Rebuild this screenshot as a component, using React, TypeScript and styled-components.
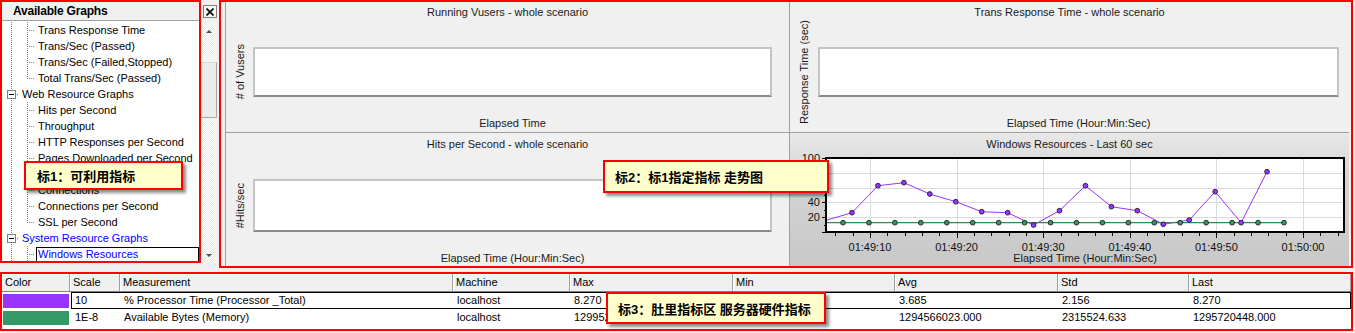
import React from 'react';
import styled, { createGlobalStyle } from 'styled-components';

const GlobalStyle = createGlobalStyle`
  html, body { margin: 0; padding: 0; }
  body {
    width: 1355px;
    height: 333px;
    overflow: hidden;
    background: #f0f0f0;
    font-family: "Liberation Sans", Arial, "Noto Sans CJK SC", sans-serif;
    font-size: 11px;
    color: #000;
  }
`;

const Screen = styled.div`
  position: relative;
  width: 1355px;
  height: 333px;
  display: flex;
  flex-direction: column;
`;

const TopArea = styled.div`
  display: flex;
  height: 268px;
`;

const RedFrame = styled.div`
  box-sizing: border-box;
  border: 2px solid #ff0000;
`;

/* ---------- available graphs tree ---------- */

const GraphTree = styled(RedFrame)`
  width: 201px;
  height: 263px;
  display: flex;
  flex-direction: column;
  background: #fff;
  overflow: hidden;
`;

const TreeHeader = styled.div`
  flex: none;
  height: 18px;
  line-height: 18px;
  padding-left: 11px;
  background: #f0f0f0;
  border-bottom: 1px solid #a0a0a0;
  font-size: 12px;
  font-weight: bold;
  letter-spacing: -0.2px;
`;

const TreeList = styled.div`
  padding: 1px 0 0 1px;
  display: flex;
  flex-direction: column;
`;

const TreeRow = styled.div`
  display: flex;
  align-items: center;
  height: 16px;
`;

const ConnectorBox = styled.span`
  flex: none;
  width: 16px;
  height: 16px;
  display: block;
  svg { display: block; }
`;

const TreeLabel = styled.span<{ $link?: boolean; $focused?: boolean }>`
  box-sizing: border-box;
  height: 15px;
  line-height: 13px;
  margin-left: 1px;
  padding: 0 1px;
  border: 1px solid ${(p) => (p.$focused ? '#000' : 'transparent')};
  color: ${(p) => (p.$link ? '#0000ff' : '#000')};
  white-space: nowrap;
  flex: ${(p) => (p.$focused ? 1 : 'none')};
`;

type Conn = 'pipe' | 'tee' | 'ell' | 'open';

type TreeItem = { label: string; cells: Conn[]; link?: boolean; focused?: boolean };

const TREE: TreeItem[] = [
  { label: 'Trans Response Time', cells: ['pipe', 'tee'] },
  { label: 'Trans/Sec (Passed)', cells: ['pipe', 'tee'] },
  { label: 'Trans/Sec (Failed,Stopped)', cells: ['pipe', 'tee'] },
  { label: 'Total Trans/Sec (Passed)', cells: ['pipe', 'ell'] },
  { label: 'Web Resource Graphs', cells: ['open'] },
  { label: 'Hits per Second', cells: ['pipe', 'tee'] },
  { label: 'Throughput', cells: ['pipe', 'tee'] },
  { label: 'HTTP Responses per Second', cells: ['pipe', 'tee'] },
  { label: 'Pages Downloaded per Second', cells: ['pipe', 'tee'] },
  { label: 'Retries per Second', cells: ['pipe', 'tee'] },
  { label: 'Connections', cells: ['pipe', 'tee'] },
  { label: 'Connections per Second', cells: ['pipe', 'tee'] },
  { label: 'SSL per Second', cells: ['pipe', 'ell'] },
  { label: 'System Resource Graphs', cells: ['open'], link: true },
  { label: 'Windows Resources', cells: ['pipe', 'tee'], link: true, focused: true },
];

const Connector = ({ kind }: { kind: Conn }) => (
  <ConnectorBox>
    <svg width="16" height="16" viewBox="0 0 16 16">
      <g stroke="#808080" strokeDasharray="1 1" shapeRendering="crispEdges">
        {(kind === 'pipe' || kind === 'tee') && <line x1="8.5" y1="0" x2="8.5" y2="16" />}
        {kind === 'ell' && <line x1="8.5" y1="0" x2="8.5" y2="9" />}
        {(kind === 'tee' || kind === 'ell') && <line x1="10" y1="8.5" x2="16" y2="8.5" />}
        {kind === 'open' && (
          <>
            <line x1="8.5" y1="0" x2="8.5" y2="4" />
            <line x1="8.5" y1="14" x2="8.5" y2="16" />
            <line x1="14" y1="8.5" x2="16" y2="8.5" />
          </>
        )}
      </g>
      {kind === 'open' && (
        <g shapeRendering="crispEdges">
          <rect x="4.5" y="4.5" width="8" height="8" fill="#fff" stroke="#808080" />
          <line x1="6" y1="8.5" x2="11" y2="8.5" stroke="#000" />
        </g>
      )}
    </svg>
  </ConnectorBox>
);

const SideColumn = styled.div`
  width: 17px;
  height: 263px;
  margin-right: 1px;
  display: flex;
  flex-direction: column;
`;

const CloseButton = styled.div`
  box-sizing: border-box;
  width: 14px;
  height: 13px;
  margin: 5px 0 0 2px;
  border: 1px solid #808080;
  background: #f4f4f4;
  display: flex;
  align-items: center;
  justify-content: center;
`;

const ScrollBar = styled.div`
  width: 16px;
  flex: 1;
  margin-top: 5px;
  display: flex;
  flex-direction: column;
  background: repeating-conic-gradient(#ececec 0 25%, #fbfbfb 0 50%) 0 0 / 2px 2px;
`;

const ScrollButton = styled.div`
  height: 16px;
  flex: none;
  display: flex;
  align-items: center;
  justify-content: center;
`;

const Arrow = styled.span<{ $down?: boolean }>`
  width: 0;
  height: 0;
  border-left: 3px solid transparent;
  border-right: 3px solid transparent;
  ${(p) => (p.$down ? 'border-top: 3px solid #505050;' : 'border-bottom: 3px solid #505050;')}
`;

const ScrollTrack = styled.div`
  flex: 1;
  padding-top: 23px;
`;

const ScrollThumb = styled.div`
  box-sizing: border-box;
  height: 56px;
  background: #ebebeb;
  border: 1px solid #a8a8a8;
  border-top-color: #d8d8d8;
  border-left-color: #d8d8d8;
`;

/* ---------- graph area ---------- */

const GraphArea = styled(RedFrame)`
  width: 1134px;
  height: 268px;
  padding: 0 2px 0 4px;
  display: grid;
  grid-template-columns: 564px 560px;
  grid-template-rows: 131px 133px;
  background: #f0f0f0;
`;

const Panel = styled.div<{ $top?: boolean; $active?: boolean }>`
  box-sizing: border-box;
  display: flex;
  flex-direction: column;
  border-left: 1px solid #a0a0a0;
  border-bottom: ${(p) => (p.$top ? '1px solid #a0a0a0' : 'none')};
  background: ${(p) =>
    p.$active ? 'linear-gradient(180deg, #e8e8e8 0%, #d4d4d4 35%, #c8c8c8 100%)' : '#f0f0f0'};
  min-width: 0;
`;

const PanelTitle = styled.div<{ $h: number }>`
  flex: none;
  height: ${(p) => p.$h}px;
  line-height: ${(p) => p.$h}px;
  text-align: center;
  color: #1a1a1a;
  white-space: nowrap;
`;

const PanelBody = styled.div<{ $top: number; $h: number }>`
  display: flex;
  flex: none;
  height: ${(p) => p.$h}px;
  margin-top: ${(p) => p.$top}px;
`;

const YLabelCol = styled.div<{ $w: number }>`
  flex: none;
  width: ${(p) => p.$w}px;
  height: 100%;
  display: flex;
  align-items: center;
  justify-content: center;
`;

const YLabel = styled.span`
  flex: none;
  writing-mode: vertical-rl;
  transform: rotate(180deg);
  white-space: nowrap;
  color: #1a1a1a;
`;

const EmptyPlot = styled.div<{ $right: number }>`
  box-sizing: border-box;
  flex: 1;
  height: 100%;
  margin-right: ${(p) => p.$right}px;
  background: #fff;
  border: 2px solid #c4c4c4;
  border-bottom-color: #8a8a8a;
`;

const XLabel = styled.div<{ $h: number; $left: number; $right: number }>`
  margin-top: auto;
  flex: none;
  height: ${(p) => p.$h}px;
  line-height: ${(p) => p.$h}px;
  padding: 0 ${(p) => p.$right}px 0 ${(p) => p.$left}px;
  text-align: center;
  color: #1a1a1a;
  white-space: nowrap;
`;

const ChartSvg = styled.svg`
  display: block;
  flex: none;
  overflow: visible;
  font-family: "Liberation Sans", Arial, sans-serif;
  font-size: 11px;
`;

type EmptyGraphProps = {
  title: string;
  yLabel: string;
  xLabel: string;
  top?: boolean;
  labelW: number;
  right: number;
};

const EmptyGraph = ({ title, yLabel, xLabel, top, labelW, right }: EmptyGraphProps) => (
  <Panel $top={top}>
    <PanelTitle $h={top ? 20 : 22}>{title}</PanelTitle>
    <PanelBody $top={top ? 25 : 24} $h={top ? 50 : 53}>
      <YLabelCol $w={labelW}>
        <YLabel>{yLabel}</YLabel>
      </YLabelCol>
      <EmptyPlot $right={right} />
    </PanelBody>
    <XLabel $h={top ? 18 : 16} $left={labelW} $right={right}>
      {xLabel}
    </XLabel>
  </Panel>
);

// Windows Resources chart, drawn in page coordinates
const PLOT = { x: 826, y: 158, w: 518, h: 74 };
const STEP = 25.94;
const PROC_Y = [212.7, 185.7, 182.7, 194, 201.7, 211.7, 212.7, 225, 210.7, 185.7, 206.7, 210.7, 224.3, 220, 191.7, 222.7, 171.7];
const procPts = PROC_Y.map((y, i) => [852 + STEP * i, y]);
const memPts = Array.from({ length: 18 }, (_, i) => [843 + STEP * i, 222.7]);
const TIMES = ['01:49:10', '01:49:20', '01:49:30', '01:49:40', '01:49:50', '01:50:00'];
const vy = (v: number) => PLOT.y + PLOT.h - (v * PLOT.h) / 100;

const WindowsChart = () => {
  const bottom = PLOT.y + PLOT.h;
  const right = PLOT.x + PLOT.w;
  const ticks: number[] = [];
  for (let k = -2; k <= 27; k++) ticks.push(k);
  return (
    <ChartSvg width="559" height="95" viewBox="790 155 559 95">
      <rect x={PLOT.x} y={PLOT.y} width={PLOT.w} height={PLOT.h} fill="#fff" />
      <g stroke="#dadada" strokeWidth="1" shapeRendering="crispEdges">
        {[80, 60, 40, 20].map((v) => (
          <line key={v} x1={PLOT.x} x2={right} y1={Math.round(vy(v)) + 0.5} y2={Math.round(vy(v)) + 0.5} />
        ))}
        {TIMES.map((t, i) => {
          const x = Math.round(870 + 86.6 * i) + 0.5;
          return <line key={t} x1={x} x2={x} y1={PLOT.y} y2={bottom} />;
        })}
      </g>
      <polyline
        points={[[827, 220], ...procPts].map((p) => p.join(',')).join(' ')}
        fill="none"
        stroke="#9933ff"
        strokeWidth="1"
      />
      <line x1={827} x2={memPts[memPts.length - 1][0]} y1={222.7} y2={222.7} stroke="#2e8b57" strokeWidth="1.2" />
      {memPts.map(([x, y]) => (
        <circle key={`m${x}`} cx={x} cy={y} r="2.4" fill="#2e9a66" stroke="#111" strokeWidth="0.8" />
      ))}
      {procPts.map(([x, y]) => (
        <circle key={`p${x}`} cx={x} cy={y} r="2.4" fill="#9933ff" stroke="#111" strokeWidth="0.8" />
      ))}
      <rect x={PLOT.x} y={PLOT.y} width={PLOT.w} height={PLOT.h} fill="none" stroke="#000" strokeWidth="2" />
      <g stroke="#000" strokeWidth="1" shapeRendering="crispEdges">
        {ticks.map((k) => {
          const x = Math.round(870 + 17.32 * k) + 0.5;
          return <line key={k} x1={x} x2={x} y1={bottom} y2={bottom + (k % 5 === 0 ? 6 : 4)} />;
        })}
        {[100, 90, 80, 70, 60, 50, 40, 30, 20, 10, 0].map((v) => (
          <line key={v} x1={PLOT.x - (v % 20 === 0 ? 4 : 2)} x2={PLOT.x} y1={Math.round(vy(v)) + 0.5} y2={Math.round(vy(v)) + 0.5} />
        ))}
      </g>
      <g fill="#111" textAnchor="end">
        {[100, 80, 60, 40, 20].map((v) => (
          <text key={v} x={820} y={vy(v) + 4}>
            {v}
          </text>
        ))}
      </g>
      <g fill="#111" textAnchor="middle">
        {TIMES.map((t, i) => (
          <text key={t} x={870 + 86.6 * i} y={251}>
            {t}
          </text>
        ))}
      </g>
    </ChartSvg>
  );
};

/* ---------- legend table ---------- */

const COLS = '68px 50px 333px 117px 163px 162px 163px 131px 1fr';
const BODY_COLS = '49px 333px 117px 163px 162px 163px 131px 1fr';

const Legend = styled(RedFrame)`
  margin-top: 4px;
  width: 1353px;
  height: 59px;
  background: #fff;
  display: flex;
  flex-direction: column;
`;

const LegendHeader = styled.div`
  display: grid;
  grid-template-columns: ${COLS};
  height: 18px;
  box-sizing: border-box;
  border-bottom: 1px solid #808080;
  background: #f0f0f0;
`;

const HeaderCell = styled.div`
  box-sizing: border-box;
  padding-left: 3px;
  line-height: 17px;
  border-right: 1px solid #a0a0a0;
  box-shadow: inset 1px 1px 0 #fff;
  white-space: nowrap;
  overflow: hidden;
`;

const LegendRow = styled.div`
  display: flex;
  height: 17px;
`;

const SwatchCell = styled.div`
  flex: none;
  width: 68px;
  padding: 2px 1px 1px 1px;
  box-sizing: border-box;
`;

const Swatch = styled.div<{ $color: string }>`
  height: 100%;
  background: ${(p) => p.$color};
`;

const RowBody = styled.div<{ $focused?: boolean }>`
  flex: 1;
  display: grid;
  grid-template-columns: ${BODY_COLS};
  box-sizing: border-box;
  border: 1px solid ${(p) => (p.$focused ? '#000' : 'transparent')};
  margin-left: 1px;
`;

const BodyCell = styled.div`
  padding-left: 3px;
  line-height: 15px;
  white-space: nowrap;
  overflow: hidden;
`;

const HEADERS = ['Color', 'Scale', 'Measurement', 'Machine', 'Max', 'Min', 'Avg', 'Std', 'Last'];

const MEASUREMENTS = [
  {
    color: '#9933ff',
    values: ['10', '% Processor Time (Processor _Total)', 'localhost', '8.270', '0.781', '3.685', '2.156', '8.270'],
    focused: true,
  },
  {
    color: '#339966',
    values: ['1E-8', 'Available Bytes (Memory)', 'localhost', '1299521536.000', '1290194944.000', '1294566023.000', '2315524.633', '1295720448.000'],
  },
];

/* ---------- callouts ---------- */

const Callout = styled.div<{ $x: number; $y: number; $w: number; $h: number; $pad: number }>`
  position: absolute;
  left: ${(p) => p.$x}px;
  top: ${(p) => p.$y}px;
  width: ${(p) => p.$w}px;
  height: ${(p) => p.$h}px;
  box-sizing: border-box;
  padding-left: ${(p) => p.$pad}px;
  border: 2px solid #ff0000;
  background: #ffffcc;
  box-shadow: 3px 3px 3px rgba(0, 0, 0, 0.45);
  display: flex;
  align-items: center;
  font-family: "Liberation Sans", "Noto Sans CJK SC", sans-serif;
  font-size: 13px;
  font-weight: bold;
  white-space: nowrap;
`;

const App = () => (
  <Screen>
    <GlobalStyle />
    <TopArea>
      <GraphTree>
        <TreeHeader>Available Graphs</TreeHeader>
        <TreeList>
          {TREE.map((item) => (
            <TreeRow key={item.label}>
              {item.cells.map((c, i) => (
                <Connector key={i} kind={c} />
              ))}
              <TreeLabel $link={item.link} $focused={item.focused}>
                {item.label}
              </TreeLabel>
            </TreeRow>
          ))}
        </TreeList>
      </GraphTree>
      <SideColumn>
        <CloseButton>
          <svg width="8" height="8" viewBox="0 0 8 8">
            <path d="M0.5 0.5 L7.5 7.5 M7.5 0.5 L0.5 7.5" stroke="#000" strokeWidth="1.6" />
          </svg>
        </CloseButton>
        <ScrollBar>
          <ScrollButton>
            <Arrow />
          </ScrollButton>
          <ScrollTrack>
            <ScrollThumb />
          </ScrollTrack>
          <ScrollButton>
            <Arrow $down />
          </ScrollButton>
        </ScrollBar>
      </SideColumn>
      <GraphArea>
        <EmptyGraph top title="Running Vusers - whole scenario" yLabel="# of Vusers" xLabel="Elapsed Time" labelW={27} right={17} />
        <EmptyGraph
          top
          title="Trans Response Time - whole scenario"
          yLabel="Response Time (sec)"
          xLabel="Elapsed Time (Hour:Min:Sec)"
          labelW={28}
          right={10}
        />
        <EmptyGraph title="Hits per Second - whole scenario" yLabel="#Hits/sec" xLabel="Elapsed Time (Hour:Min:Sec)" labelW={27} right={17} />
        <Panel $active>
          <PanelTitle $h={22}>Windows Resources - Last 60 sec</PanelTitle>
          <WindowsChart />
          <XLabel $h={16} $left={36} $right={5}>
            Elapsed Time (Hour:Min:Sec)
          </XLabel>
        </Panel>
      </GraphArea>
    </TopArea>
    <Legend>
      <LegendHeader>
        {HEADERS.map((h) => (
          <HeaderCell key={h}>{h}</HeaderCell>
        ))}
      </LegendHeader>
      {MEASUREMENTS.map((m) => (
        <LegendRow key={m.values[1]}>
          <SwatchCell>
            <Swatch $color={m.color} />
          </SwatchCell>
          <RowBody $focused={m.focused}>
            {m.values.map((v, i) => (
              <BodyCell key={i}>{v}</BodyCell>
            ))}
          </RowBody>
        </LegendRow>
      ))}
    </Legend>
    <Callout $x={24} $y={161} $w={159} $h={29} $pad={11}>
      标1：可利用指标
    </Callout>
    <Callout $x={603} $y={160} $w={226} $h={33} $pad={10}>
      标2：标1指定指标 走势图
    </Callout>
    <Callout $x={606} $y={292} $w={220} $h={32} $pad={10}>
      标3：肚里指标区 服务器硬件指标
    </Callout>
  </Screen>
);

export default App;
